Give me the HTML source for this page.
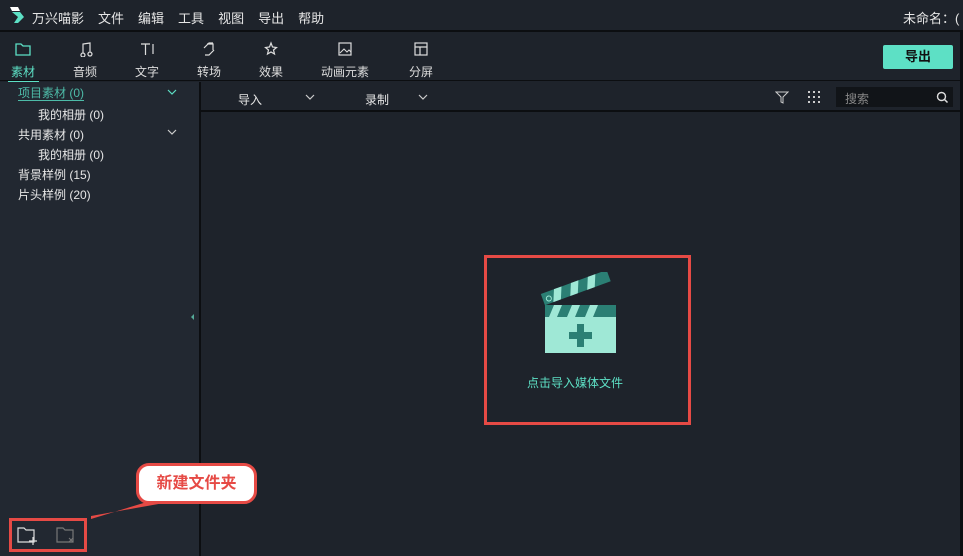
<!DOCTYPE html>
<html><head><meta charset="utf-8"><style>
*{margin:0;padding:0;box-sizing:border-box}
body{width:963px;height:556px;background:#1e232b;font-family:"Liberation Sans","Noto Sans CJK SC",sans-serif;color:#e6e6e6;position:relative;overflow:hidden;font-size:12px}
.a{position:absolute;white-space:nowrap}
.hl{position:absolute;background:#0c0e11;height:2px}
.menu span{margin-right:14px;font-size:13px}
.tab{position:absolute;top:41px;text-align:center;font-size:12px;color:#ddd}
.tab svg{display:block;margin:0 auto 6px}
.side{position:absolute;left:0;top:82px;width:199px;height:474px;background:#222831}
</style></head><body>
<svg class="a" style="left:8px;top:5px" width="18" height="20"><polygon points="2,2 10,2 12,6 4,6" fill="#fff"/><polygon points="4,7 12,7 16,12 10,18 6,18 10,12" fill="#5de0c5"/></svg>
<div class="a menu" style="left:32px;top:8px"><span>万兴喵影</span><span>文件</span><span>编辑</span><span>工具</span><span>视图</span><span>导出</span><span>帮助</span></div>
<div class="a" style="left:903px;top:8px;font-size:13px">未命名：(</div>
<div class="hl" style="left:0;top:30px;width:963px"></div>
<div class="tab" style="left:8px;width:30px;color:#5de0c5"><svg width="18" height="16"><path d="M2 3h5l2 2h7v9H2z" fill="none" stroke="#5de0c5" stroke-width="1.3"/></svg>素材</div>
<div class="a" style="left:8px;top:80px;width:31px;height:2px;background:#5de0c5"></div>
<div class="tab" style="left:70px;width:30px"><svg width="16" height="16"><path d="M6 12V3l7-1v9M6 12a2 2 0 1 1-.1 0M13 11a2 2 0 1 1-.1 0" fill="none" stroke="#ddd" stroke-width="1.2"/></svg>音频</div>
<div class="tab" style="left:132px;width:30px"><svg width="16" height="16"><path d="M2 3h9M6.5 3v11M14 3v10" fill="none" stroke="#ddd" stroke-width="1.2"/></svg>文字</div>
<div class="tab" style="left:194px;width:30px"><svg width="16" height="16"><path d="M3 7l5-5h4M13 9l-5 5H4M6 3h6v6" fill="none" stroke="#ddd" stroke-width="1.2"/></svg>转场</div>
<div class="tab" style="left:256px;width:30px"><svg width="16" height="16"><path d="M8 2l1.5 4 4 .5-3 2.5 1 4L8 11l-3.5 2 1-4-3-2.5 4-.5z" fill="none" stroke="#ddd" stroke-width="1.2"/></svg>效果</div>
<div class="tab" style="left:318px;width:54px"><svg width="16" height="16"><rect x="2" y="2" width="12" height="12" fill="none" stroke="#ddd" stroke-width="1.2"/><path d="M3 12l4-4 3 3 2-2 2 2" fill="none" stroke="#ddd"/></svg>动画元素</div>
<div class="tab" style="left:406px;width:30px"><svg width="16" height="16"><rect x="2" y="2" width="12" height="12" fill="none" stroke="#ddd" stroke-width="1.2"/><path d="M2 6h12M7 6v8" stroke="#ddd" stroke-width="1.2"/></svg>分屏</div>
<div class="a" style="left:883px;top:45px;width:70px;height:24px;background:#5de0c5;border-radius:2px;color:#111;font-weight:bold;text-align:center;line-height:24px;font-size:13px">导出</div>
<div class="hl" style="left:0;top:80px;width:960px;height:1px"></div>
<div class="side"></div>
<div class="a" style="left:199px;top:82px;width:2px;height:474px;background:#0c0e11"></div>
<div class="a" style="left:18px;top:86px;color:#4dbba8;border-bottom:1px solid #4dbba8;line-height:14px">项目素材 (0)</div>
<svg class="a" style="left:167px;top:89px" width="10" height="6"><path d="M1 1l4 4 4-4" fill="none" stroke="#5de0c5" stroke-width="1.2"/></svg>
<div class="a" style="left:38px;top:106px">我的相册 (0)</div>
<div class="a" style="left:18px;top:126px">共用素材 (0)</div>
<svg class="a" style="left:167px;top:129px" width="10" height="6"><path d="M1 1l4 4 4-4" fill="none" stroke="#ccc" stroke-width="1.2"/></svg>
<div class="a" style="left:38px;top:146px">我的相册 (0)</div>
<div class="a" style="left:18px;top:166px">背景样例 (15)</div>
<div class="a" style="left:18px;top:186px">片头样例 (20)</div>
<svg class="a" style="left:191px;top:314px" width="4" height="6"><path d="M3 0L0 3l3 3z" fill="#5a9"/></svg>
<div class="a" style="left:238px;top:91px">导入</div>
<svg class="a" style="left:305px;top:94px" width="10" height="6"><path d="M1 1l4 4 4-4" fill="none" stroke="#ccc" stroke-width="1.2"/></svg>
<div class="a" style="left:365px;top:91px">录制</div>
<svg class="a" style="left:418px;top:94px" width="10" height="6"><path d="M1 1l4 4 4-4" fill="none" stroke="#ccc" stroke-width="1.2"/></svg>
<svg class="a" style="left:775px;top:90px" width="14" height="14"><path d="M1 2h12l-5 5v6l-2-1V7z" fill="none" stroke="#ccc"/></svg>
<svg class="a" style="left:807px;top:90px" width="14" height="14" fill="#ccc"><rect x="1" y="1" width="2" height="2"/><rect x="6" y="1" width="2" height="2"/><rect x="11" y="1" width="2" height="2"/><rect x="1" y="6" width="2" height="2"/><rect x="6" y="6" width="2" height="2"/><rect x="11" y="6" width="2" height="2"/><rect x="1" y="11" width="2" height="2"/><rect x="6" y="11" width="2" height="2"/><rect x="11" y="11" width="2" height="2"/></svg>
<div class="a" style="left:836px;top:87px;width:117px;height:20px;background:#111418"></div>
<div class="a" style="left:845px;top:90px;color:#888">搜索</div>
<svg class="a" style="left:936px;top:91px" width="13" height="13"><circle cx="5.5" cy="5.5" r="4" fill="none" stroke="#ddd" stroke-width="1.4"/><path d="M8.5 8.5l3 3" stroke="#ddd" stroke-width="1.5"/></svg>
<div class="a" style="left:201px;top:110px;width:759px;height:2px;background:#0c0e11"></div>
<div class="a" style="left:960px;top:30px;width:3px;height:526px;background:#0c0e11"></div>
<div class="a" style="left:484px;top:255px;width:207px;height:170px;border:3px solid #e64a45"></div>
<svg class="a" style="left:540px;top:272px" width="80" height="86">
<g transform="rotate(-20 8 30)"><rect x="4" y="20" width="70" height="12" fill="#2b7f74"/><path d="M18 20h8l-5 12h-8zM36 20h8l-5 12h-8zM54 20h8l-5 12h-8z" fill="#9fe8d6"/><circle cx="10" cy="27" r="2.5" fill="none" stroke="#9fe8d6"/></g>
<rect x="5" y="33" width="71" height="12" fill="#2b7f74"/><path d="M14 33h8l-5 12h-8zM32 33h8l-5 12h-8zM50 33h8l-5 12h-8z" fill="#9fe8d6"/>
<rect x="5" y="45" width="71" height="36" fill="#9fe8d6"/>
<path d="M37 52h7v8h8v7h-8v8h-7v-8h-8v-7h8z" fill="#2b7f74"/>
</svg>
<div class="a" style="left:527px;top:374px;color:#5de0c5;font-size:12px">点击导入媒体文件</div>
<div class="a" style="left:9px;top:518px;width:78px;height:34px;border:3px solid #e64a45"></div>
<svg class="a" style="left:16px;top:525px" width="60" height="22"><path d="M2 3h6l2 2h8v12H2z" fill="none" stroke="#ddd" stroke-width="1.2"/><path d="M17 12v8M13 16h8" stroke="#ddd" stroke-width="1.2"/><path d="M41 3h6l2 2h8v12H41z" fill="none" stroke="#777" stroke-width="1.2"/><path d="M53 13l4 4M57 13l-4 4" stroke="#777"/></svg>
<svg class="a" style="left:88px;top:490px" width="90" height="32"><polygon points="3,29 72,8 76,13 3,26" fill="#e64a45"/></svg>
<div class="a" style="left:136px;top:463px;width:121px;height:41px;border:3px solid #e64a45;border-radius:13px;background:#fff;color:#e64a45;font-weight:bold;font-size:16px;text-align:center;line-height:35px">新建文件夹</div>
</body></html>
